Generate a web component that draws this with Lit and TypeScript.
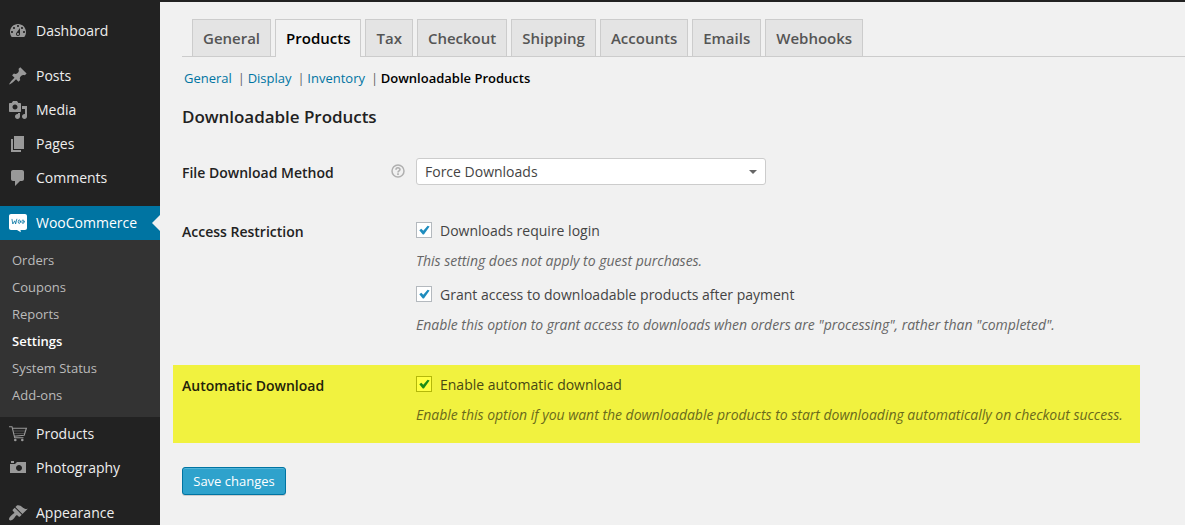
import { LitElement, html, svg, css, nothing } from "lit";
import { customElement, property } from "lit/decorators.js";
import { classMap } from "lit/directives/class-map.js";

const icons: Record<string, unknown> = {
  dashboard: svg`<path d="M3.76 16h12.48c1.1-1.37 1.76-3.11 1.76-5 0-4.42-3.58-8-8-8s-8 3.58-8 8c0 1.89.66 3.63 1.76 5zM10 4c.55 0 1 .45 1 1s-.45 1-1 1-1-.45-1-1 .45-1 1-1zM6 6c.55 0 1 .45 1 1s-.45 1-1 1-1-.45-1-1 .45-1 1-1zm8 0c.55 0 1 .45 1 1s-.45 1-1 1-1-.45-1-1 .45-1 1-1zm-5.37 5.55L12 7v6c0 1.1-.9 2-2 2s-2-.9-2-2c0-.57.24-1.08.63-1.45zM4 10c.55 0 1 .45 1 1s-.45 1-1 1-1-.45-1-1 .45-1 1-1zm12 0c.55 0 1 .45 1 1s-.45 1-1 1-1-.45-1-1 .45-1 1-1zm-5 3c0-.55-.45-1-1-1s-1 .45-1 1 .45 1 1 1 1-.45 1-1z"/>`,
  posts: svg`<path d="M10.44 3.02l1.82-1.82 6.36 6.35-1.83 1.82c-1.05-.68-2.48-.57-3.41.36l-.75.75c-.92.93-1.04 2.35-.35 3.41l-1.83 1.82-2.41-2.41-2.8 2.79c-.42.42-3.38 2.71-3.8 2.29s1.86-3.39 2.28-3.81l2.79-2.79L4.1 9.36l1.83-1.82c1.05.69 2.48.57 3.4-.36l.75-.75c.93-.92 1.05-2.35.36-3.41z"/>`,
  media: svg`<path d="M13 11V4c0-.55-.45-1-1-1h-1.67L9 1H5L3.67 3H2c-.55 0-1 .45-1 1v7c0 .55.45 1 1 1h10c.55 0 1-.45 1-1zM7 4.5c1.38 0 2.5 1.12 2.5 2.5S8.38 9.5 7 9.5 4.5 8.38 4.5 7 5.62 4.5 7 4.5zM14 6h5v10.5c0 1.38-1.12 2.5-2.5 2.5S14 17.88 14 16.5s1.12-2.5 2.5-2.5c.17 0 .34.02.5.05V9h-3V6zm-4 8.05V13h2v3.5c0 1.38-1.12 2.5-2.5 2.5S7 17.88 7 16.5 8.12 14 9.5 14c.17 0 .34.02.5.05z"/>`,
  pages: svg`<path d="M6 15V2h10v13H6zm-1 1h8v2H3V5h2v11z"/>`,
  comments: svg`<path d="M5 2h9c1.1 0 2 .9 2 2v7c0 1.1-.9 2-2 2h-2l-5 5v-5H5c-1.1 0-2-.9-2-2V4c0-1.1.9-2 2-2z"/>`,
  woo: svg`<path d="M3 1h14c1.1 0 2 .9 2 2v12c0 1.100-.9 2-2 2h-4.500l.3 2.200L9 17H3c-1.100 0-2-.9-2-2V3c0-1.100.9-2 2-2z"/><g fill="none" stroke="#0074a2" stroke-width=".8" stroke-linecap="round" stroke-linejoin="round"><path d="M4 6.300l.8 4.700 2-3.200.8 3.200 1.200-4.800"/><ellipse cx="11.300" cy="8.700" rx="1.100" ry="1.800"/><ellipse cx="15" cy="8.700" rx="1.100" ry="1.800"/></g>`,
  products: svg`<g fill="none" stroke="currentColor" stroke-width="1.100"><path d="M1 2.700h3l2.700 11.100h8.800M4.500 4.200h13.900l-2.200 7L6 12.200"/><path stroke-opacity=".45" stroke-width=".8" d="M5 7h12.300M5.600 9.500h11"/></g><circle cx="7.300" cy="16" r="1.300"/><circle cx="14.300" cy="16" r="1.300"/>`,
  photography: svg`<path d="M6 5V3H3v2h3zm12 10V4H9L7 6H2v9h16zm-7-8c1.660 0 3 1.340 3 3s-1.340 3-3 3-3-1.340-3-3 1.340-3 3-3z"/>`,
  appearance: svg`<path d="M14.48 11.06L7.41 3.99l1.5-1.5c.5-.56 2.3-.47 3.51.32 1.21.8 1.43 1.28 2.91 2.1 1.18.64 2.45 1.26 4.45.85zm-.71.71L6.7 4.7 4.93 6.47c-.39.39-.39 1.02 0 1.41l1.06 1.06c.39.39.39 1.03 0 1.42-.6.6-1.43 1.11-2.21 1.69-.35.26-.7.53-1.01.84C1.43 14.23.4 16.08 1.4 17.07c.99 1 2.84-.03 4.18-1.36.31-.31.58-.66.85-1.02.57-.78 1.08-1.61 1.69-2.21.39-.39 1.02-.39 1.41 0l1.06 1.06c.39.39 1.02.39 1.41 0z"/>`,
};

const menu: string[][] = [
  ["Dashboard"],
  ["Posts", "Media", "Pages", "Comments"],
  ["WooCommerce", "Products", "Photography"],
  ["Appearance"],
];
const submenu = ["Orders", "Coupons", "Reports", "Settings", "System Status", "Add-ons"];
const tabs = ["General", "Products", "Tax", "Checkout", "Shipping", "Accounts", "Emails", "Webhooks"];

@customElement("admin-menu")
class AdminMenu extends LitElement {
  static styles = css`
    :host { display: block; background: #222; color: #eee; font-size: 14px; line-height: 18px; padding-top: 12px; overflow: hidden; }
    .group { margin-bottom: 11px; }
    .item { display: flex; align-items: center; height: 34px; padding-left: 8px; gap: 8px; }
    .icon { width: 20px; height: 20px; fill: currentColor; color: #999; flex: none; }
    .current { background: #0074a2; color: #fff; }
    .current .icon { color: #fff; }
    .arrow { margin-left: auto; border: 8px solid transparent; border-right-color: #f1f1f1; border-left: 0; }
    .sub { background: #333; padding: 7px 12px 8px; font-size: 13px; color: #bbb; }
    .entry { height: 27px; line-height: 27px; }
    .selected { color: #fff; font-weight: 600; }
  `;
  private item(name: string) {
    const current = name === "WooCommerce";
    return html`<div class=${classMap({ item: true, current })}>
        <svg class="icon" viewBox="0 0 20 20">${icons[current ? "woo" : name.toLowerCase()]}</svg>
        <span>${name}</span>${current ? html`<span class="arrow"></span>` : nothing}
      </div>
      ${current
        ? html`<div class="sub">${submenu.map((s) => html`<div class=${classMap({ entry: true, selected: s === "Settings" })}>${s}</div>`)}</div>`
        : nothing}`;
  }
  render() {
    return menu.map((g) => html`<div class="group">${g.map((n) => this.item(n))}</div>`);
  }
}

@customElement("check-option")
class CheckOption extends LitElement {
  @property() label = "";
  @property() description = "";
  @property({ type: Boolean, reflect: true }) marked = false;
  static styles = css`
    :host { display: block; --box: #fff; --line: #b4b9be; --tick: #1e8cbe; --text: #444; --note: #666; }
    :host([marked]) { --box: #ffff42; --line: #b4b80a; --tick: #1e8c16; --text: #484812; --note: #6a6a1b; }
    .row { display: flex; align-items: center; gap: 8px; height: 20px; color: var(--text); }
    .box { box-sizing: border-box; width: 16px; height: 16px; margin-bottom: 2px; border: 1px solid var(--line); background: var(--box); flex: none; }
    .tick { display: block; width: 14px; height: 14px; fill: var(--tick); }
    .note { margin-top: 10px; height: 20px; font-style: italic; letter-spacing: -0.015px; color: var(--note); white-space: nowrap; }
  `;
  render() {
    return html`<div class="row">
        <span class="box"><svg class="tick" viewBox="0 0 14 14"><path d="M2.300 7.300l2-1.500 2 2L10.600 2.800l2 .7L6.900 11.400H5.800z"/></svg></span>
        <span>${this.label}</span>
      </div>
      <div class="note">${this.description}</div>`;
  }
}

@customElement("app-root")
class AppRoot extends LitElement {
  static styles = css`
    :host { display: grid; grid-template-columns: 160px 1fr; box-sizing: border-box; width: 100%; height: 525px; overflow: hidden; border-top: 2px solid #222; background: #f1f1f1; font-family: "Open Sans", sans-serif; font-size: 14px; line-height: 20px; color: #444; }
    .content { padding: 17px 0 0 22px; min-width: 0; }
    .tabs { display: flex; gap: 4px; height: 37px; padding-left: 10px; border-bottom: 1px solid #ccc; }
    .tab { box-sizing: border-box; height: 37px; padding: 6px 10px 0; border: 1px solid #ccc; border-bottom: 0; background: #e4e4e4; color: #555; font-size: 15px; line-height: 24px; font-weight: 600; white-space: nowrap; }
    .active { height: 38px; background: #f1f1f1; color: #000; }
    .links { display: flex; margin: 12px 0 0 2px; font-size: 13px; line-height: 18px; color: #0074a2; white-space: pre; }
    .bar { color: #666; letter-spacing: -0.37px; }
    .here { color: #000; font-weight: 600; }
    h3 { margin: 18px 0 0; font-size: 17px; line-height: 24px; letter-spacing: -0.04px; font-weight: 600; color: #222; }
    .field { display: grid; grid-template-columns: 209px 25px 1fr; color: #222; }
    .name { font-weight: 600; padding-top: 1px; }
    .method { margin-top: 29px; }
    .method .name { padding-top: 5px; }
    .help { width: 14px; height: 14px; margin-top: 6px; }
    .select { box-sizing: border-box; display: flex; align-items: center; justify-content: space-between; width: 350px; height: 27px; padding: 0 8px; border: 1px solid #ccc; border-radius: 3px; background: #fff; color: #444; }
    .caret { border: 4px solid transparent; border-top: 4px solid #666; border-bottom: 0; }
    .access { margin-top: 35px; }
    .access .name { padding-top: 2px; }
    .options { grid-column: 3; display: grid; gap: 14px; padding-top: 1px; }
    .highlight { box-sizing: border-box; width: 967px; height: 78px; margin: 30px 0 0 -9px; padding: 10px 0 0 9px; background: #f1f23f; }
    .highlight .name { color: #22220a; }
    .highlight .options { padding-top: 0; }
    .save { box-sizing: border-box; display: inline-block; width: 104px; margin-top: 24px; height: 28px; padding: 0 10px; border: 1px solid #0074a2; border-radius: 3px; background: #2ea2cc; box-shadow: inset 0 1px 0 rgba(120, 200, 230, 0.5), 0 1px 0 rgba(0, 0, 0, 0.15); color: #fff; font-family: inherit; font-size: 13px; line-height: 26px; white-space: nowrap; }
  `;
  render() {
    return html`<admin-menu></admin-menu>
      <main class="content">
        <nav class="tabs">${tabs.map((t) => html`<div class=${classMap({ tab: true, active: t === "Products" })}>${t}</div>`)}</nav>
        <div class="links"><span>General</span><span class="bar">  | </span><span>Display</span><span class="bar">  | </span><span>Inventory</span><span class="bar">  | </span><span class="here">Downloadable Products</span></div>
        <h3>Downloadable Products</h3>
        <div class="field method">
          <div class="name">File Download Method</div>
          <svg class="help" viewBox="0 0 14 14" fill="none" stroke="#b0b0b0"><circle cx="7" cy="7" r="6" stroke-width="1.500"/><path d="M5 5.700c0-2.500 4-2.500 4-.1C9 6.900 7 6.900 7 8.400" stroke-width="1.600"/><path d="M7 9.300v1.600" stroke-width="1.700"/></svg>
          <div class="select"><span>Force Downloads</span><span class="caret"></span></div>
        </div>
        <div class="field access">
          <div class="name">Access Restriction</div>
          <div class="options">
            <check-option label="Downloads require login" description="This setting does not apply to guest purchases."></check-option>
            <check-option label="Grant access to downloadable products after payment" description='Enable this option to grant access to downloads when orders are "processing", rather than "completed".'></check-option>
          </div>
        </div>
        <div class="field highlight">
          <div class="name">Automatic Download</div>
          <div class="options">
            <check-option marked label="Enable automatic download" description="Enable this option if you want the downloadable products to start downloading automatically on checkout success."></check-option>
          </div>
        </div>
        <button class="save">Save changes</button>
      </main>`;
  }
}
